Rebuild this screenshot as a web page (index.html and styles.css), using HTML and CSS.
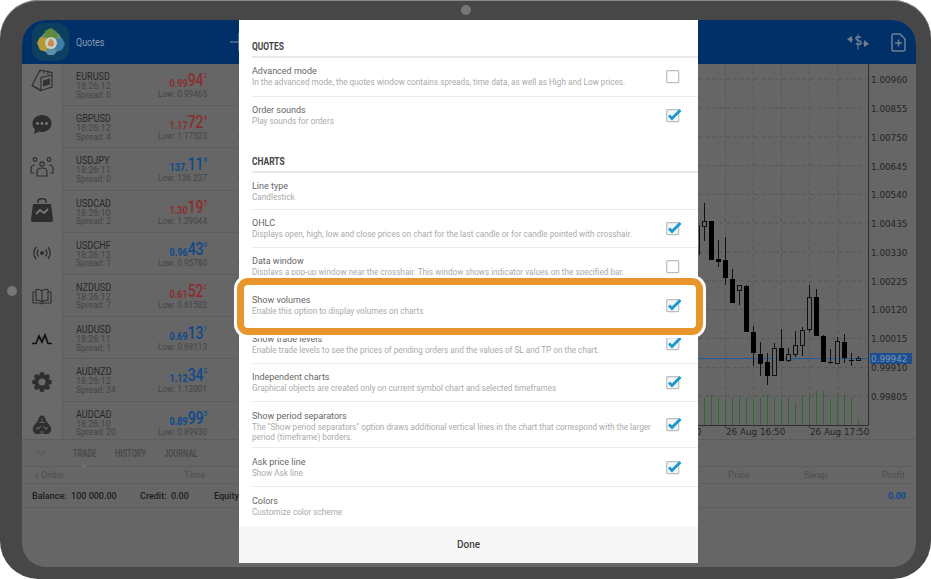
FILE: index.html
```html
<!DOCTYPE html>
<html>
<head>
    <title>Chart settings</title>
    <meta name="viewport" content="width=device-width, initial-scale=1.0">
    <link rel="stylesheet" href="styles.css">
</head>
<body>
    <svg class="defs" width="0" height="0">
        <symbol id="box-on" viewBox="0 0 17 15">
            <rect x="1.7" y="1.7" width="12" height="12" rx="1" fill="#eef6fa" stroke="#bdbdbd" stroke-width="1.2"/>
            <path d="M4 7.5l3 3L15.5 2" fill="none" stroke="#1b98cd" stroke-width="2.8"/>
        </symbol>
        <symbol id="box-off" viewBox="0 0 17 15">
            <rect x="1.7" y="1.7" width="12" height="12" rx="1" fill="#fff" stroke="#bdbdbd" stroke-width="1.2"/>
        </symbol>
    </svg>

    <div class="tablet">
        <span class="cam"></span>
        <span class="side-dot"></span>
        <div class="screen">
            <div class="app-header">
                <svg class="logo" width="37" height="38" viewBox="0 0 37 38">
                    <rect width="37" height="38" rx="12" fill="#0d3f60"/>
                    <circle cx="19" cy="19" r="11" fill="#6f8f8a"/>
                    <path d="M19 5l6 4 1 6-7 1-7-2 1-6z" fill="#5f8a3e"/>
                    <path d="M8 14l6 1 2 8-2 6-6-2-3-7z" fill="#b39a35"/>
                    <path d="M24 16l6-1 3 6-3 6-6 2-3-7z" fill="#3f7fa6"/>
                    <path d="M13 28l6-3 6 3-3 4h-6z" fill="#5c8fa8"/>
                    <circle cx="19" cy="20" r="6" fill="#c9cfc4"/>
                    <path d="M19 15.500c2.500 2.500 3.500 4.500 3 6.500s-5 2-6 0 .5-4 3-6.500z" fill="#c98a52"/>
                </svg>
                <span class="app-title">Quotes</span>
                <svg class="add-sym" width="18" height="18" viewBox="0 0 18 18">
                    <path d="M0 9h18M9 0v18" stroke="#7c8fa6" stroke-width="1.2"/>
                </svg>
                <div class="header-right">
                    <svg width="22" height="18" viewBox="0 0 22 18" fill="#6f7f93">
                        <path d="M11 1v16" stroke="#6f7f93" stroke-width="1"/>
                        <path d="M14 4.500c-1-1-5-1.500-5 1s5 1.500 5 4-4 2.500-5 1" fill="none" stroke="#6f7f93" stroke-width="1.6"/>
                        <path d="M0 6l5-3v2.500l1 1-1 1V10zM22 11l-5 3v-2.500l-1-1 1-1V7z"/>
                    </svg>
                    <svg width="15" height="19" viewBox="0 0 15 19" fill="none" stroke="#6f7f93" stroke-width="1.500">
                        <path d="M1 2.500a1.500 1.500 0 0 1 1.500-1.500H9l5 5v10.500a1.500 1.500 0 0 1-1.500 1.500h-10A1.500 1.500 0 0 1 1 16.500z"/>
                        <path d="M7.500 6.500v7M4 10h7"/>
                    </svg>
                </div>
            </div>

            <div class="main">
                <div class="sidebar">
                    <div class="nav-icon"><svg width="24" height="24" viewBox="0 0 24 24" fill="none" stroke="#2e2e2e" stroke-width="1.100"><path d="M2 16.500L10 1l12 2.500V18L11 21.500z"/><path d="M2 16.500L11 21.500V8.500L22 6M10 1v2M14 1.500v3M18 2.500v3"/><path d="M13 11.500l7-2v6l-7 2z" fill="#333" stroke="none"/></svg></div>
                    <div class="nav-icon"><svg width="24" height="24" viewBox="0 0 24 24" fill="#2e2e2e"><path d="M12 3c5.500 0 9.500 3.800 9.500 8.500S17.500 20 12 20c-1 0-2 0-3-.4L4 22l1-4.500C3.500 16 2.500 14 2.500 11.500 2.500 6.800 6.500 3 12 3z"/><g fill="#777"><circle cx="7.500" cy="11.500" r="1.400"/><circle cx="12" cy="11.500" r="1.400"/><circle cx="16.500" cy="11.500" r="1.400"/></g></svg></div>
                    <div class="nav-icon"><svg width="26" height="24" viewBox="0 0 26 24" fill="none" stroke="#2e2e2e" stroke-width="1.200"><circle cx="13" cy="9" r="2.200"/><circle cx="6" cy="4.500" r="1.800"/><circle cx="20" cy="4.500" r="1.800"/><path d="M8 21v-4c0-2.500 2-4 5-4s5 1.500 5 4v4zM5 18H2v-4c0-2 1-4 4-4M21 18h3v-4c0-2-1-4-4-4"/></svg></div>
                    <div class="nav-icon"><svg width="24" height="26" viewBox="0 0 24 26" fill="#2e2e2e"><path d="M8 6V4c0-3 8-3 8 0v2" fill="none" stroke="#2e2e2e" stroke-width="1.500"/><path d="M3 7h18l2 16c0 1.500-1 2-2 2H3c-1 0-2-.500-2-2z"/><path d="M6 17l4-4 4 3 4-4" fill="none" stroke="#777" stroke-width="1.800"/></svg></div>
                    <div class="nav-icon"><svg width="20" height="16" viewBox="0 0 20 16" fill="none" stroke="#2e2e2e" stroke-width="1.300"><circle cx="10" cy="8" r="1.300" fill="#2e2e2e"/><path d="M6.500 4.500c-1.500 2-1.500 5 0 7M13.500 4.500c1.500 2 1.500 5 0 7M4 2c-2.800 3.500-2.800 8.500 0 12M16 2c2.800 3.500 2.800 8.500 0 12"/></svg></div>
                    <div class="nav-icon"><svg width="20" height="17" viewBox="0 0 20 17" fill="none" stroke="#2e2e2e" stroke-width="1.100"><path d="M10 3C8.500 1.500 6 1 4 1.500v11c2-.5 4.500 0 6 1.500 1.500-1.500 4-2 6-1.500v-11C14 1 11.500 1.500 10 3zM10 3v11M4 4H1v11h7l2 1 2-1h7V4h-3"/></svg></div>
                    <div class="nav-icon"><svg width="22" height="12" viewBox="0 0 22 12" fill="none" stroke="#111" stroke-width="1.700"><path d="M1 10.500h4L8 3l3 6 3-7 3 8.500h4"/></svg></div>
                    <div class="nav-icon"><svg width="20" height="20" viewBox="0 0 20 20" fill="#2e2e2e"><circle cx="10" cy="10" r="7"/><circle cx="10" cy="2.600" r="2.500"/><circle cx="10" cy="17.400" r="2.500"/><circle cx="2.600" cy="10" r="2.500"/><circle cx="17.400" cy="10" r="2.500"/><circle cx="4.800" cy="4.800" r="2.500"/><circle cx="15.200" cy="4.800" r="2.500"/><circle cx="4.800" cy="15.200" r="2.500"/><circle cx="15.200" cy="15.200" r="2.500"/><circle cx="10" cy="10" r="3.600" fill="#6a6a6a"/></svg></div>
                    <div class="nav-icon"><svg width="20" height="20" viewBox="0 0 20 20" fill="#2e2e2e"><path d="M10 .5c2 0 3.500 2 4 5 1 2 3 3.500 4.500 6 1.500 3 .5 6.500-2.500 7.500-2 .5-4-.5-6-.5s-4 1-6 .5C1 18 0 14.500 1.500 11.500c1.500-2.500 3.500-4 4.500-6 .5-3 2-5 4-5z"/><path d="M10 3v5M5 15l4-4M15 15l-4-4M7 7.500l6 0M4 13h4M12 13h4M8 17h4" fill="none" stroke="#6a6a6a" stroke-width=".9"/></svg></div>
                </div>

                <div class="quotes">
                    <div class="quote"><div class="sym"><b>EURUSD</b><time>18:26:12</time><span>Spread: 0</span></div><div class="price"><div class="bid red"><small>0.99</small><em>94</em><sup>2</sup></div><span>Low: 0.99465</span></div><span class="high">High</span></div>
                    <div class="quote"><div class="sym"><b>GBPUSD</b><time>18:26:12</time><span>Spread: 4</span></div><div class="price"><div class="bid red"><small>1.17</small><em>72</em><sup>4</sup></div><span>Low: 1.17523</span></div><span class="high">High</span></div>
                    <div class="quote"><div class="sym"><b>USDJPY</b><time>18:26:11</time><span>Spread: 0</span></div><div class="price"><div class="bid blue"><small>137.</small><em>11</em><sup>6</sup></div><span>Low: 136.237</span></div><span class="high">High</span></div>
                    <div class="quote"><div class="sym"><b>USDCAD</b><time>18:26:10</time><span>Spread: 2</span></div><div class="price"><div class="bid red"><small>1.30</small><em>19</em><sup>5</sup></div><span>Low: 1.29044</span></div><span class="high">High</span></div>
                    <div class="quote"><div class="sym"><b>USDCHF</b><time>18:26:12</time><span>Spread: 1</span></div><div class="price"><div class="bid blue"><small>0.96</small><em>43</em><sup>0</sup></div><span>Low: 0.95780</span></div><span class="high">High</span></div>
                    <div class="quote"><div class="sym"><b>NZDUSD</b><time>18:26:12</time><span>Spread: 7</span></div><div class="price"><div class="bid red"><small>0.61</small><em>52</em><sup>2</sup></div><span>Low: 0.61502</span></div><span class="high">High</span></div>
                    <div class="quote"><div class="sym"><b>AUDUSD</b><time>18:26:11</time><span>Spread: 1</span></div><div class="price"><div class="bid blue"><small>0.69</small><em>13</em><sup>1</sup></div><span>Low: 0.69113</span></div><span class="high">High</span></div>
                    <div class="quote"><div class="sym"><b>AUDNZD</b><time>18:26:12</time><span>Spread: 34</span></div><div class="price"><div class="bid blue"><small>1.12</small><em>34</em><sup>2</sup></div><span>Low: 1.12001</span></div><span class="high">High</span></div>
                    <div class="quote"><div class="sym"><b>AUDCAD</b><time>18:26:10</time><span>Spread: 20</span></div><div class="price"><div class="bid blue"><small>0.89</small><em>99</em><sup>5</sup></div><span>Low: 0.89930</span></div><span class="high">High</span></div>
                </div>

                <svg class="chart" width="218" height="375" viewBox="698 64 218 375">
                    <g stroke="#575757" stroke-dasharray="4 3" fill="none">
                        <path d="M698 79H868M698 108H868M698 137H868M698 165.500H868M698 194.500H868M698 223H868M698 252H868M698 281H868M698 309.500H868M698 338.500H868M698 367.500H868M698 396H868"/>
                        <path d="M725.500 64V425M753.500 64V425M781.500 64V425M809.500 64V425M838 64V425"/>
                    </g>
                    <g stroke="#2b6a30" fill="none">
                        <path d="M704.500 425V398M711.500 425V395M718.500 425V398M725.500 425V399M732.500 425V397M739.500 425V396M746.500 425V398M753.500 425V399M760.500 425V398M767.500 425V395M774.500 425V397M781.500 425V398M788.500 425V396M795.500 425V402M802.500 425V395M809.500 425V395M816.500 425V390M823.500 425V391M830.500 425V399M837.500 425V394M844.500 425V394M851.500 425V397M858.500 425V418"/>
                    </g>
                    <path d="M698 358.500H868" stroke="#1d5b9e"/>
                    <g class="wicks" stroke="#111" fill="none">
                        <path d="M699.500 225V255M704.500 203V241M718.500 240V267M725.500 237V285M732.500 269V300M739.500 285V305M746.500 285V332M753.500 326V366M760.500 342V376M767.500 353V385M774.500 343V376M781.500 329V361M788.500 348V362M795.500 331V357M802.500 327V356M809.500 285V332M816.500 289V297M823.500 335V362M830.500 349V364M837.500 337V364M844.500 334V363M851.500 353V366M858.500 356V361"/>
                    </g>
                    <g fill="#000">
                        <rect x="709" y="221" width="5" height="39"/>
                        <rect x="716" y="259" width="5" height="3"/>
                        <rect x="723" y="260" width="5" height="18"/>
                        <rect x="730" y="279" width="5" height="24"/>
                        <rect x="744" y="286" width="5" height="46"/>
                        <rect x="751" y="332" width="5" height="21"/>
                        <rect x="758" y="354" width="5" height="10"/>
                        <rect x="765" y="362" width="5" height="14"/>
                        <rect x="779" y="348" width="5" height="13"/>
                        <rect x="814" y="297" width="5" height="39"/>
                        <rect x="821" y="336" width="5" height="26"/>
                        <rect x="828" y="362" width="5" height="1"/>
                        <rect x="842" y="342" width="5" height="16"/>
                        <rect x="849" y="360" width="5" height="1"/>
                    </g>
                    <g fill="#666" stroke="#111">
                        <rect x="702.500" y="221.500" width="4" height="5"/>
                        <rect x="737.500" y="285.500" width="4" height="5"/>
                        <rect x="772.500" y="348.500" width="4" height="27"/>
                        <rect x="786.500" y="354.500" width="4" height="6"/>
                        <rect x="793.500" y="345.500" width="4" height="9"/>
                        <rect x="800.500" y="330.500" width="4" height="15"/>
                        <rect x="807.500" y="297.500" width="4" height="32"/>
                        <rect x="835.500" y="341.500" width="4" height="22"/>
                        <rect x="856.500" y="358.500" width="4" height="2"/>
                    </g>
                    <path d="M868.500 64V425.500H698" stroke="#2e2e2e" fill="none"/>
                    <path d="M725.500 425V428M809.500 425V428" stroke="#2e2e2e"/>
                    <g class="axis">
                        <text x="871" y="83">1.00960</text>
                        <text x="871" y="112">1.00855</text>
                        <text x="871" y="141">1.00750</text>
                        <text x="871" y="170">1.00645</text>
                        <text x="871" y="198">1.00540</text>
                        <text x="871" y="227">1.00435</text>
                        <text x="871" y="256">1.00330</text>
                        <text x="871" y="285">1.00225</text>
                        <text x="871" y="313">1.00120</text>
                        <text x="871" y="342">1.00015</text>
                        <text x="871" y="371">0.99910</text>
                        <text x="871" y="400">0.99805</text>
                        <text x="642" y="435">26 Aug 15:50</text>
                        <text x="726" y="435">26 Aug 16:50</text>
                        <text x="810" y="435">26 Aug 17:50</text>
                    </g>
                    <rect x="870" y="353" width="42" height="11" fill="#1c4f8f"/>
                    <text class="ask" x="871" y="362">0.99942</text>
                </svg>
            </div>

            <div class="bottom">
                <div class="tabs">
                    <svg class="chev" width="10" height="6" viewBox="0 0 10 6"><path d="M1 1l4 4 4-4" fill="none" stroke="#555" stroke-width="1.200"/></svg>
                    <span class="tab on">TRADE</span>
                    <span class="tab">HISTORY</span>
                    <span class="tab">JOURNAL</span>
                </div>
                <div class="cols">
                    <span class="col-order"><i>&#8595;</i> Order</span>
                    <span class="col-time">Time</span>
                    <span class="col-price">Price</span>
                    <span class="col-swap">Swap</span>
                    <span class="col-profit">Profit</span>
                </div>
                <div class="balance">
                    <span class="bal-a">Balance: &nbsp;100 000.00</span>
                    <span class="bal-b">Credit: &nbsp;0.00</span>
                    <span class="bal-c">Equity: &nbsp;100 000.00</span>
                    <span class="bal-total">0.00</span>
                </div>
            </div>

            <div class="modal">
                <div class="group-title"><span>QUOTES</span></div>
                <div class="row">
                    <div class="row-text"><div class="row-name">Advanced mode</div><div class="row-desc">In the advanced mode, the quotes window contains spreads, time data, as well as High and Low prices.</div></div>
                    <svg class="box" width="17" height="15"><use href="#box-off"/></svg>
                </div>
                <div class="row last">
                    <div class="row-text"><div class="row-name">Order sounds</div><div class="row-desc">Play sounds for orders</div></div>
                    <svg class="box" width="17" height="15"><use href="#box-on"/></svg>
                </div>
                <div class="group-title"><span>CHARTS</span></div>
                <div class="row short">
                    <div class="row-text"><div class="row-name">Line type</div><div class="row-desc">Candlestick</div></div>
                </div>
                <div class="row">
                    <div class="row-text"><div class="row-name">OHLC</div><div class="row-desc">Displays open, high, low and close prices on chart for the last candle or for candle pointed with crosshair.</div></div>
                    <svg class="box" width="17" height="15"><use href="#box-on"/></svg>
                </div>
                <div class="row">
                    <div class="row-text"><div class="row-name">Data window</div><div class="row-desc">Displays a pop-up window near the crosshair. This window shows indicator values on the specified bar.</div></div>
                    <svg class="box" width="17" height="15"><use href="#box-off"/></svg>
                </div>
                <div class="row marked">
                    <div class="row-text"><div class="row-name">Show volumes</div><div class="row-desc">Enable this option to display volumes on charts</div></div>
                    <svg class="box" width="17" height="15"><use href="#box-on"/></svg>
                </div>
                <div class="row">
                    <div class="row-text"><div class="row-name">Show trade levels</div><div class="row-desc">Enable trade levels to see the prices of pending orders and the values of SL and TP on the chart.</div></div>
                    <svg class="box" width="17" height="15"><use href="#box-on"/></svg>
                </div>
                <div class="row">
                    <div class="row-text"><div class="row-name">Independent charts</div><div class="row-desc">Graphical objects are created only on current symbol chart and selected timeframes</div></div>
                    <svg class="box" width="17" height="15"><use href="#box-on"/></svg>
                </div>
                <div class="row tall">
                    <div class="row-text"><div class="row-name">Show period separators</div><div class="row-desc">The "Show period separators" option draws additional vertical lines in the chart that correspond with the larger period (timeframe) borders.</div></div>
                    <svg class="box" width="17" height="15"><use href="#box-on"/></svg>
                </div>
                <div class="row ask-row">
                    <div class="row-text"><div class="row-name">Ask price line</div><div class="row-desc">Show Ask line</div></div>
                    <svg class="box" width="17" height="15"><use href="#box-on"/></svg>
                </div>
                <div class="row last">
                    <div class="row-text"><div class="row-name">Colors</div><div class="row-desc">Customize color scheme</div></div>
                </div>
                <div class="modal-foot">Done</div>
            </div>
        </div>
    </div>
</body>
</html>
```

FILE: styles.css
```css
body {
    margin: 0;
    background-color: #fff;
    font-family: Roboto, "Liberation Sans", sans-serif;
    overflow: hidden;
}
.defs {
    position: absolute;
}
.tablet {
    position: relative;
    box-sizing: border-box;
    width: 931px;
    height: 579px;
    padding: 20px 15px 12px 22px;
    background-color: #474747;
    border-radius: 38px;
    box-shadow: inset 0 1px 0 #8a8a8a;
}
.cam, .side-dot {
    position: absolute;
    width: 10px;
    height: 10px;
    border-radius: 50%;
    background-color: #777;
}
.cam {
    left: 461px;
    top: 5px;
}
.side-dot {
    left: 7px;
    top: 286px;
}
.screen {
    position: relative;
    display: flex;
    flex-direction: column;
    height: 547px;
    background-color: #666;
    border-radius: 24px;
}
.app-header {
    display: flex;
    align-items: center;
    flex: none;
    height: 44px;
    padding-left: 10px;
    background-color: #003067;
    border-radius: 24px 24px 0 0;
}
.app-title {
    margin-left: 7px;
    width: 156px;
    font-size: 10.5px;
    color: #8a9bb0;
    transform: scaleX(.85);
    transform-origin: left;
}
.add-sym {
    margin-left: -2px;
}
.header-right {
    display: flex;
    align-items: center;
    gap: 22px;
    margin-left: auto;
    margin-right: 10px;
}
.main {
    display: flex;
    flex: none;
    height: 375px;
}
.sidebar {
    flex: none;
    width: 40px;
    overflow: hidden;
    background-color: #6a6a6a;
    border-right: 1px solid #5d5d5d;
}
.nav-icon {
    display: flex;
    align-items: center;
    justify-content: center;
    height: 43px;
}
.nav-icon:first-child {
    margin-top: -4.5px;
}
.quotes {
    flex: 1;
    min-width: 0;
    overflow: hidden;
}
.quote {
    display: flex;
    box-sizing: border-box;
    height: 42.2px;
    padding: 7px 0 0 13px;
    border-bottom: 1px solid #5d5d5d;
    white-space: nowrap;
}
.sym {
    display: flex;
    flex-direction: column;
    width: 82px;
    font-size: 8.4px;
    line-height: 8.5px;
    color: #454545;
}
.sym b {
    font-weight: 400;
    font-size: 11.5px;
    line-height: 11px;
    color: #262626;
    transform: scaleX(.79);
    transform-origin: left;
}
.sym time {
    font-size: 9px;
}
.price {
    display: flex;
    flex-direction: column;
    align-items: flex-end;
    width: 49px;
    font-size: 8.2px;
    color: #454545;
}
.bid {
    display: flex;
    align-items: flex-start;
    height: 18px;
    font-weight: 500;
    transform: scaleX(.78);
    transform-origin: right;
}
.bid small {
    margin-top: 5px;
    font-size: 11.5px;
    font-weight: 700;
}
.bid em {
    font-style: normal;
    font-size: 18px;
    line-height: 18px;
}
.bid sup {
    font-size: 8px;
    line-height: 9px;
}
.red {
    color: #8a2f2f;
}
.blue {
    color: #0d4a8c;
}
.high {
    margin-left: 31px;
    margin-top: 18px;
    font-size: 8.2px;
    color: #454545;
}
.chart {
    flex: none;
}
.axis text {
    font-family: "DejaVu Sans", sans-serif;
    font-size: 8.8px;
    fill: #242424;
}
.ask {
    font-family: "DejaVu Sans", sans-serif;
    font-size: 8.8px;
    fill: #7f96b3;
}
.bottom {
    flex: 1;
    border-top: 1px solid #5d5d5d;
}
.tabs {
    display: grid;
    grid-template-columns: 37px 42px 49px auto;
    align-items: center;
    height: 26px;
    padding-left: 14px;
}
.tab {
    position: relative;
    font-weight: 700;
    font-size: 10px;
    color: #4a4a4a;
    transform: scaleX(.75);
    transform-origin: left;
}
.tab.on::after {
    content: "";
    position: absolute;
    left: 15px;
    bottom: -8px;
    margin-left: -4px;
    border: 3px solid transparent;
    border-top: 0;
    border-bottom-color: #757575;
}
.cols {
    display: flex;
    align-items: center;
    height: 17px;
    border-top: 1px solid #5d5d5d;
    box-sizing: border-box;
    padding-bottom: 1px;
    font-size: 9.5px;
    color: #4e4e4e;
}
.cols span {
    flex: none;
}
.cols i {
    font-style: normal;
    font-weight: 700;
    color: #0d4a8c;
}
.col-order {
    margin-left: 12px;
    width: 150px;
}
.col-time {
    width: 22px;
}
.col-price {
    margin-left: 522px;
    width: 22px;
}
.col-swap {
    margin-left: 54px;
    width: 24px;
}
.col-profit {
    margin-left: 54px;
}
.balance {
    display: flex;
    align-items: center;
    box-sizing: border-box;
    height: 25px;
    border-top: 1px solid #5d5d5d;
    border-bottom: 1px solid #5d5d5d;
    padding: 1px 10px 0;
    font-size: 9px;
    font-weight: 500;
    color: #1d1d1d;
    white-space: nowrap;
}
.bal-a {
    width: 108px;
}
.bal-b {
    width: 74px;
}
.bal-total {
    margin-left: auto;
    font-weight: 700;
    color: #0d4a8c;
}
.modal {
    position: absolute;
    left: 217px;
    top: 0;
    display: flex;
    flex-direction: column;
    width: 459px;
    height: 543px;
    background-color: #fff;
}
.group-title {
    flex: none;
    box-sizing: border-box;
    height: 38px;
    margin-left: 13px;
    padding-top: 21px;
    border-bottom: 2px solid #e8e8e8;
    font-weight: 700;
    font-size: 10.5px;
    line-height: 12px;
    color: #444;
}
.group-title span {
    display: inline-block;
    transform: scaleX(.8);
    transform-origin: left;
}
.row {
    display: flex;
    flex: none;
    align-items: center;
    box-sizing: border-box;
    height: 38.5px;
    margin-left: 13px;
    padding-right: 16px;
    border-bottom: 1px solid #ececec;
}
.row.last {
    border-bottom: 0;
}
.row.short {
    height: 36.5px;
}
.row.tall {
    height: 46px;
}
.row.ask-row {
    height: 39px;
}
.row-text {
    flex: 1;
    align-self: flex-start;
    padding-top: 7px;
    min-width: 0;
    overflow: hidden;
    height: 100%;
    box-sizing: border-box;
}
.marked ~ .row .row-text {
    padding-top: 7.5px;
}
.row-name {
    font-size: 9px;
    line-height: 12px;
    color: #666;
}
.row-desc {
    font-size: 8.2px;
    line-height: 10px;
    color: #aaa;
}
.box {
    flex: none;
    margin-left: 10px;
}
.marked {
    position: relative;
    z-index: 1;
    border-bottom: 0;
}
.marked::before {
    content: "";
    position: absolute;
    z-index: -1;
    left: -15px;
    right: -5px;
    top: -9px;
    bottom: -10px;
    box-sizing: border-box;
    background-color: #fff;
    border: 7px solid #e8962b;
    border-radius: 11px;
    box-shadow: 0 0 0 3px #fff;
}
.modal-foot {
    flex: 1;
    display: flex;
    align-items: center;
    justify-content: center;
    background-color: #f7f7f7;
    font-size: 10px;
    font-weight: 500;
    color: #444;
}
```
